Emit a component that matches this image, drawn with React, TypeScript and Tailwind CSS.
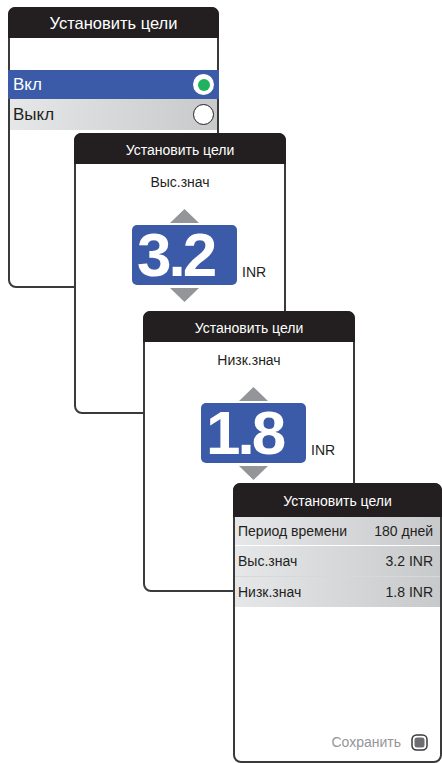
import React from "react";

const font = { fontFamily: '"Liberation Sans", Arial, sans-serif' };

function Header({ big, h = 31 }: { big?: boolean; h?: number }) {
  return (
    <div
      className={`bg-[#231f20] rounded-t-[7px] flex items-center justify-center text-white leading-none -mx-[2px] -mt-[2px] pt-[2px] ${
        big ? "text-[16.5px]" : "text-[14px]"
      } ${h === 34 ? "h-[34px]" : "h-[31px]"}`}
    >
      Установить цели
    </div>
  );
}

function Arrow({ down }: { down?: boolean }) {
  return (
    <svg width="29" height="14" viewBox="0 0 29 14" className="block">
      {down ? (
        <polygon points="0,0 29,0 14.5,14" fill="#939598" />
      ) : (
        <polygon points="14.5,0 29,14 0,14" fill="#939598" />
      )}
    </svg>
  );
}

function ValueScreen({ label, value }: { label: string; value: string }) {
  return (
    <>
      <Header />
      <div className="h-[36px] flex items-center justify-center text-[14px] text-[#231f20]">
        {label}
      </div>
      <div className="mt-[9px] ml-[56px] flex flex-col items-start">
        <div className="w-[105px] flex justify-center">
          <Arrow />
        </div>
        <div className="mt-[2px] flex items-end">
          <div className="w-[105px] h-[60px] rounded-[5px] bg-[#3b5aa7] flex items-center pl-[5px] text-white font-bold text-[62px] leading-none tracking-[-3px]">
            {value}
          </div>
          <div className="w-0 overflow-visible whitespace-nowrap ml-[5px] mb-[6px] text-[14px] leading-none text-[#231f20]">
            INR
          </div>
        </div>
        <div className="mt-[3px] w-[105px] flex justify-center">
          <Arrow down />
        </div>
      </div>
    </>
  );
}

export default function App() {
  return (
    <div className="relative w-[442px] h-[763px] bg-white overflow-hidden" style={font}>
      {/* Screen 1 */}
      <div className="absolute left-[8px] top-[7px] w-[211px] h-[281px] border-2 border-[#3a3a3a] rounded-[8px] bg-white flex flex-col">
        <Header big />
        <div className="h-[32px]" />
        <div className="h-[29px] bg-[#3b5aa7] flex items-center justify-between -mx-[2px] pl-[5px] pr-[5px] text-white text-[17px]">
          <span>Вкл</span>
          <span className="w-[21px] h-[21px] rounded-full bg-white flex items-center justify-center">
            <span className="w-[12px] h-[12px] rounded-full bg-[#1fb25f]" />
          </span>
        </div>
        <div className="h-[31px] bg-gradient-to-r from-[#e6e7e8] to-[#c7c9cb] flex items-center justify-between pl-[3px] pr-[3px] text-[#231f20] text-[17px]">
          <span>Выкл</span>
          <span className="w-[21px] h-[21px] rounded-full bg-white border border-[#231f20]" />
        </div>
      </div>

      {/* Screen 2 */}
      <div className="absolute left-[74px] top-[133px] w-[212px] h-[281px] border-2 border-[#3a3a3a] rounded-[8px] bg-white flex flex-col">
        <ValueScreen label="Выс.знач" value="3.2" />
      </div>

      {/* Screen 3 */}
      <div className="absolute left-[143px] top-[311px] w-[212px] h-[281px] border-2 border-[#3a3a3a] rounded-[8px] bg-white flex flex-col">
        <ValueScreen label="Низк.знач" value="1.8" />
      </div>

      {/* Screen 4 */}
      <div className="absolute left-[233px] top-[483px] w-[209px] h-[280px] border-2 border-[#3a3a3a] rounded-[8px] bg-white flex flex-col">
        <Header h={34} />
        <div className="h-[28px] bg-gradient-to-r from-[#e6e7e8] to-[#c7c9cb] flex items-center justify-between pl-[3px] pr-[7px] text-[14px] text-[#231f20]">
          <span>Период времени</span>
          <span>180 дней</span>
        </div>
        <div className="h-[1px] bg-white" />
        <div className="h-[30px] bg-gradient-to-r from-[#e6e7e8] to-[#c7c9cb] flex items-center justify-between pl-[3px] pr-[7px] text-[14px] text-[#231f20]">
          <span>Выс.знач</span>
          <span>3.2 INR</span>
        </div>
        <div className="h-[1px] bg-[#d6d8da]" />
        <div className="h-[30px] bg-gradient-to-r from-[#e6e7e8] to-[#c7c9cb] flex items-center justify-between pl-[3px] pr-[7px] text-[14px] text-[#231f20]">
          <span>Низк.знач</span>
          <span>1.8 INR</span>
        </div>
        <div className="mt-auto mb-[8px] flex items-center justify-end pr-[12px] gap-[10px] text-[14px] text-[#939598]">
          <span>Сохранить</span>
          <svg width="17" height="17" viewBox="0 0 17 17">
            <rect x="1" y="1" width="15" height="15" rx="4.5" fill="white" stroke="#3a3a3a" strokeWidth="1.5" />
            <rect x="3.5" y="3.5" width="10" height="10" rx="2.5" fill="#6d6e71" />
          </svg>
        </div>
      </div>
    </div>
  );
}
